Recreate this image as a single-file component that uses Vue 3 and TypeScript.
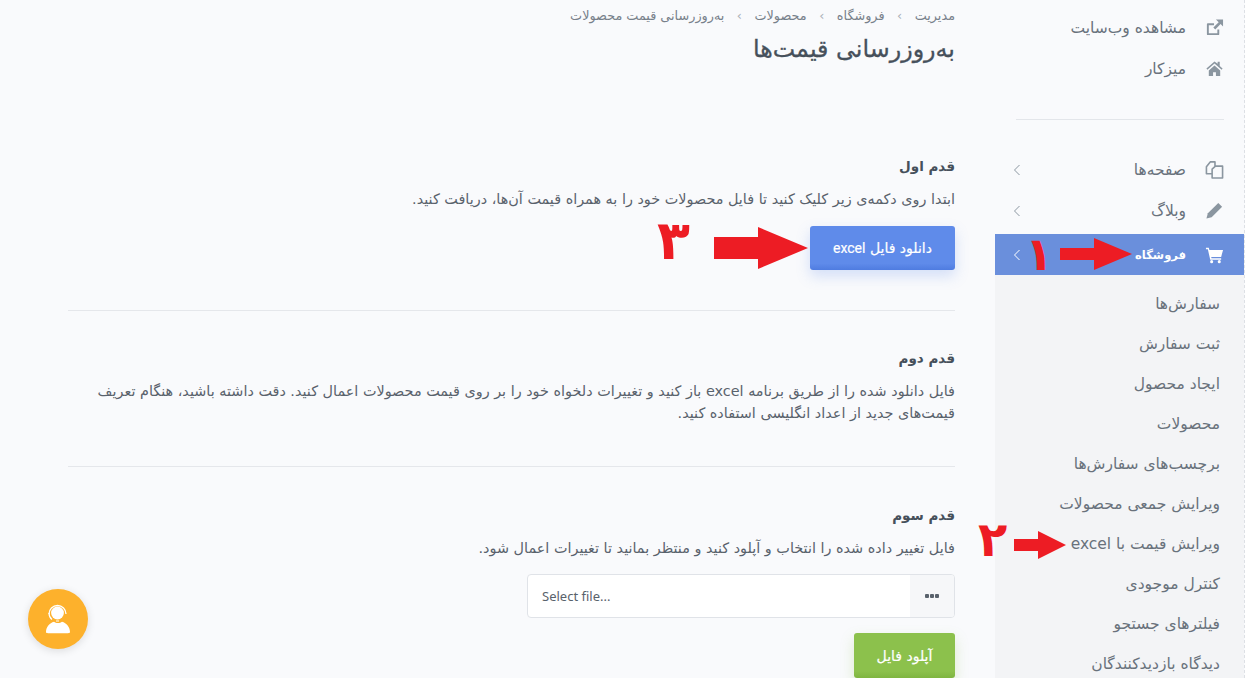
<template>
  <div class="page" dir="rtl">
    <aside class="sidebar">
      <nav class="nav-top">
        <a v-for="item in topLinks" :key="item.label" class="nav-item">
          <svg class="nav-icon" viewBox="0 0 20 20" v-html="item.icon"></svg>
          <span>{{ item.label }}</span>
        </a>
      </nav>
      <div class="nav-divider"></div>
      <nav class="nav-main">
        <a v-for="item in mainLinks" :key="item.label" :class="['nav-item', { active: item.active }]">
          <svg class="nav-icon" viewBox="0 0 20 20" v-html="item.icon"></svg>
          <span>{{ item.label }}</span>
          <svg class="chevron" viewBox="0 0 8 12"><path d="M6.5 1 1.5 6l5 5" /></svg>
        </a>
      </nav>
      <ul class="sub-nav">
        <li v-for="label in subLinks" :key="label">{{ label }}</li>
      </ul>
    </aside>

    <main class="content">
      <ol class="breadcrumb">
        <template v-for="(crumb, i) in crumbs" :key="crumb">
          <li>{{ crumb }}</li>
          <li v-if="i < crumbs.length - 1" class="sep">›</li>
        </template>
      </ol>
      <h1 class="title">به‌روزرسانی قیمت‌ها</h1>

      <section class="step step-first">
        <h2>قدم اول</h2>
        <p>ابتدا روی دکمه‌ی زیر کلیک کنید تا فایل محصولات خود را به همراه قیمت آن‌ها، دریافت کنید.</p>
        <button class="btn btn-blue" type="button">دانلود فایل <span class="latin">excel</span></button>
      </section>

      <section class="step step-second">
        <h2>قدم دوم</h2>
        <p>فایل دانلود شده را از طریق برنامه excel باز کنید و تغییرات دلخواه خود را بر روی قیمت محصولات اعمال کنید. دقت داشته باشید، هنگام تعریف قیمت‌های جدید از اعداد انگلیسی استفاده کنید.</p>
      </section>

      <section class="step step-third">
        <h2>قدم سوم</h2>
        <p>فایل تغییر داده شده را انتخاب و آپلود کنید و منتظر بمانید تا تغییرات اعمال شود.</p>
        <div class="file-row">
          <div class="file-input" dir="ltr">
            <span class="file-label">Select file...</span>
            <span class="file-more"><i></i><i></i><i></i></span>
          </div>
        </div>
        <button class="btn btn-green" type="button">آپلود فایل</button>
      </section>
    </main>

    <div class="support">
      <svg viewBox="0 0 40 40" width="40" height="40">
        <path d="M11 15a8.500 8.500 0 0 1 17 0" fill="none" stroke="#fff" stroke-width="1.3" />
        <path d="M11 14c0 3 1 5 3 6.500M21 22h-3" fill="none" stroke="#fff" stroke-width="1.2" />
        <circle cx="19.500" cy="14" r="6.400" fill="#fff" />
        <path d="M8 33c0-5 3.500-9 8-10.300 2 1.800 6 1.800 8 0 4.500 1.300 8 5.300 8 10.300 0 .8-1 1.200-2 1.200H10c-1 0-2-.4-2-1.200Z" fill="#fff" />
      </svg>
    </div>

    <div class="mark mark-one">۱</div>
    <svg class="arrow arrow-one" viewBox="0 0 72 32"><path d="M0 10h34V0l38 16-38 16V22H0Z" /></svg>
    <div class="mark mark-two">۲</div>
    <svg class="arrow arrow-two" viewBox="0 0 52 28"><path d="M0 8h24V0l28 14-28 14v-8H0Z" /></svg>
    <div class="mark mark-three">۳</div>
    <svg class="arrow arrow-three" viewBox="0 0 94 42"><path d="M0 10h44V0l50 21-50 21V32H0Z" /></svg>
  </div>
</template>

<script setup lang="ts">
const external = '<path d="M3 5.500h6.500v2H4V16h9v-4h2v5a1 1 0 0 1-1 1H3a1 1 0 0 1-1-1V6.500a1 1 0 0 1 1-1Z"/><path d="M11.500 1.500H19V9l-2.600-2.600-5.600 5.600-2-2 5.600-5.600Z"/>'
const home = '<path d="M10 2.500 1.500 10l1 1.200L10 4.800l7.500 6.400 1-1.200-3-2.600V3h-2.200v2.100Z"/><path d="M4 12 10 6.800 16 12v6h-4.500v-4h-3v4H4Z"/>'
const pages = '<path fill="none" stroke="currentColor" stroke-width="1.700" stroke-linejoin="round" d="M7.500 14.500H1.500V7L5.500 2H10.500V6.500M7.500 19V9.500L11 6.500H18.500V19Z"/>'
const pencil = '<path d="M14 2 18 6 7 17 1.500 18.500 3 13Z"/>'
const cart = '<path d="M1 3h3l.6 2.200H19l-2 7.300H6.500l.4 1.500H17v1.500H5.500L3 4.500H1Z"/><circle cx="7" cy="17.500" r="1.600"/><circle cx="15" cy="17.500" r="1.600"/>'

const topLinks = [
  { label: 'مشاهده وب‌سایت', icon: external },
  { label: 'میزکار', icon: home },
]

const mainLinks = [
  { label: 'صفحه‌ها', icon: pages, active: false },
  { label: 'وبلاگ', icon: pencil, active: false },
  { label: 'فروشگاه', icon: cart, active: true },
]

const subLinks = [
  'سفارش‌ها',
  'ثبت سفارش',
  'ایجاد محصول',
  'محصولات',
  'برچسب‌های سفارش‌ها',
  'ویرایش جمعی محصولات',
  'ویرایش قیمت با excel',
  'کنترل موجودی',
  'فیلترهای جستجو',
  'دیدگاه بازدیدکنندگان',
]

const crumbs = ['مدیریت', 'فروشگاه', 'محصولات', 'به‌روزرسانی قیمت محصولات']
</script>

<style>
html,
body {
  margin: 0;
  background: #f9fafc;
  overflow: hidden;
}
</style>

<style scoped>
.page {
  position: relative;
  display: flex;
  width: 1245px;
  height: 678px;
  overflow: hidden;
  background: #f9fafc;
  font-family: "DejaVu Sans", "Noto Sans", sans-serif;
  color: #4c5661;
}

.latin {
  font-family: Roboto, "Liberation Sans", sans-serif;
}

.sidebar {
  flex: 0 0 249px;
  height: 678px;
  border-right: 1px dashed #dde0e5;
  background: #f9fafc;
  color: #69727c;
  font-size: 15.500px;
}

.nav-top {
  padding-top: 7px;
}

.nav-item {
  display: flex;
  align-items: center;
  height: 41px;
  padding-right: 20px;
}

.nav-icon {
  width: 19px;
  height: 19px;
  margin-left: 19px;
  fill: #8b96a0;
  color: #8b96a0;
}

.nav-divider {
  height: 1px;
  margin: 30px 20px 29px 21px;
  background: #e3e6ea;
}

.nav-main .nav-item {
  position: relative;
}

.chevron {
  position: absolute;
  left: 18px;
  top: 15px;
  width: 8px;
  height: 12px;
  fill: none;
  stroke: #8b96a0;
  stroke-width: 1;
}

.nav-item.active {
  margin-top: 3px;
  background: #6a8fdc;
  color: #fff;
  font-size: 11.500px;
  font-weight: 700;
}

.nav-item.active .nav-icon {
  fill: #fff;
}

.nav-item.active .chevron {
  stroke: #fff;
}

.sub-nav {
  margin: 0;
  padding: 9px 24px 0 0;
  list-style: none;
  background: #f3f4f6;
  height: 410px;
  font-size: 15.500px;
}

.sub-nav li {
  height: 40px;
  line-height: 40px;
  white-space: nowrap;
}

.content {
  flex: 1;
  padding: 0 40px 0 68px;
}

.breadcrumb {
  display: flex;
  gap: 12.500px;
  margin: 0;
  padding: 7px 0 0;
  height: 23px;
  list-style: none;
  font-size: 12.800px;
  line-height: 17px;
  color: #77808a;
}

.breadcrumb .sep {
  color: #a9b0b8;
}

.title {
  margin: -1px 0 0;
  height: 41px;
  font-size: 23.800px;
  line-height: 40px;
  font-weight: 400;
  color: #46505b;
  -webkit-text-stroke: 0.3px #46505b;
}

.step h2 {
  margin: 0 0 12px;
  font-size: 13.500px;
  line-height: 20px;
  font-weight: 700;
  color: #46505b;
}

.step p {
  margin: 0;
  font-size: 14.400px;
  line-height: 22px;
  color: #59626c;
}

.step-first {
  padding: 86px 0 40px;
  border-bottom: 1px solid #e5e7eb;
}

.step-second {
  padding: 37px 0 42px;
  border-bottom: 1px solid #e5e7eb;
}

.step-third {
  padding: 38px 0 0;
}

.btn {
  display: block;
  margin: 16px 0 0;
  border: 0;
  border-radius: 3px;
  font: 400 14px "DejaVu Sans", sans-serif;
  color: #fff;
  -webkit-text-stroke: 0.2px #fff;
}

.btn-blue {
  width: 145px;
  height: 44px;
  background: linear-gradient(#5f8bea 85%, #4f7ce0);
  box-shadow: 0 6px 14px rgba(95, 139, 234, 0.25);
}

.btn-green {
  width: 101px;
  height: 45px;
  margin-top: 15px;
  background: linear-gradient(#8cc14c 85%, #7fb540);
  box-shadow: 0 6px 14px rgba(140, 193, 76, 0.25);
}

.file-row {
  display: flex;
  margin-top: 15px;
}

.file-input {
  display: flex;
  align-items: center;
  justify-content: space-between;
  box-sizing: border-box;
  width: 428px;
  height: 44px;
  border: 1px solid #e0e3e8;
  border-radius: 4px;
  background: #fff;
  overflow: hidden;
}

.file-label {
  padding-left: 14px;
  font: 13px "Noto Sans", sans-serif;
  color: #59626c;
}

.file-more {
  display: flex;
  align-items: center;
  justify-content: center;
  gap: 1px;
  width: 44px;
  height: 100%;
  background: #f6f7f9;
}

.file-more i {
  width: 4px;
  height: 4px;
  background: #59626c;
  border-radius: 1px;
}

.support {
  position: absolute;
  left: 28px;
  top: 589px;
  display: flex;
  align-items: center;
  justify-content: center;
  width: 60px;
  height: 60px;
  border-radius: 50%;
  background: #fdb12c;
  box-shadow: 0 2px 8px rgba(0, 0, 0, 0.12);
}

.mark {
  position: absolute;
  color: #ed1c24;
  font-weight: 700;
  line-height: 1;
}

.mark-one {
  left: 1025px;
  top: 231px;
  font-size: 46px;
}

.mark-two {
  left: 978px;
  top: 515px;
  font-size: 48px;
}

.mark-three {
  left: 657px;
  top: 214px;
  font-size: 54px;
}

.arrow {
  position: absolute;
  fill: #ed1c24;
}

.arrow-one {
  left: 1060px;
  top: 238px;
  width: 72px;
  height: 32px;
}

.arrow-two {
  left: 1014px;
  top: 531px;
  width: 52px;
  height: 28px;
}

.arrow-three {
  left: 714px;
  top: 227px;
  width: 94px;
  height: 42px;
}
</style>
